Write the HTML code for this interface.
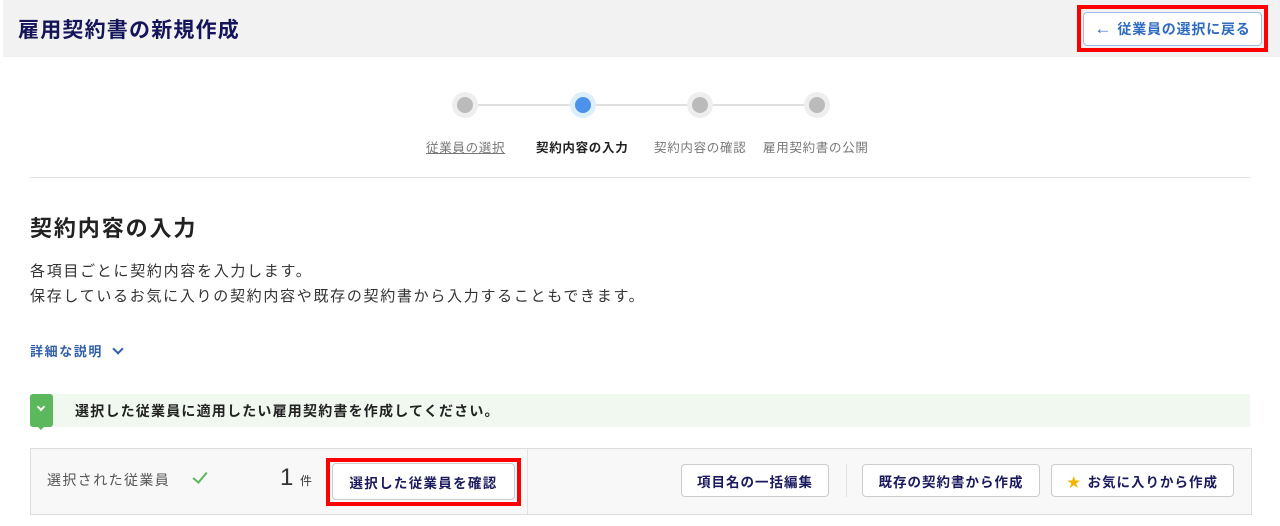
<!DOCTYPE html>
<html><head><meta charset="utf-8"><style>
*{box-sizing:border-box;margin:0;padding:0}
body{width:1280px;height:526px;background:#fff;font-family:"Liberation Sans","Noto Sans CJK JP",sans-serif;position:relative;overflow:hidden;color:#333}
.a{position:absolute}
.hdr{left:3px;top:0;width:1277px;height:57px;background:#f2f2f2}
.title{left:18px;top:14px;font-size:21px;font-weight:bold;color:#14145a;letter-spacing:1.2px}
.btn{background:#fff;border:1px solid #ccc;border-radius:4px;font-weight:bold;font-size:13.5px;color:#1a1a5e;display:flex;align-items:center;justify-content:center;letter-spacing:1px;white-space:nowrap}
.c{width:26px;height:26px;border-radius:50%;background:#eee;top:92px}
.c i{position:absolute;left:5px;top:5px;width:16px;height:16px;border-radius:50%;background:#bbb}
.lab{top:137px;font-size:12.5px;color:#777;letter-spacing:0.7px;white-space:nowrap}
</style></head><body>
<div class="a hdr"></div>
<div class="a title">雇用契約書の新規作成</div>
<div class="a" style="left:1077px;top:5px;width:191px;height:47px;border:4px solid #f00"></div>
<div class="a btn" style="left:1083px;top:12px;width:179px;height:34px;border-color:#9bbde6;color:#2f6bbf;font-size:14px;letter-spacing:0.8px"><span style="font-size:17px;margin-right:6px;letter-spacing:0">←</span>従業員の選択に戻る</div>

<div class="a" style="left:478px;top:104px;width:328px;height:2px;background:#e0e0e0"></div>
<div class="a c" style="left:452px"><i></i></div>
<div class="a c" style="left:570px;background:#ddeefc"><i style="background:#4d93ec"></i></div>
<div class="a c" style="left:687px"><i></i></div>
<div class="a c" style="left:804px"><i></i></div>
<div class="a lab" style="left:426px;text-decoration:underline">従業員の選択</div>
<div class="a lab" style="left:536px;color:#222;font-weight:bold">契約内容の入力</div>
<div class="a lab" style="left:654px">契約内容の確認</div>
<div class="a lab" style="left:763px">雇用契約書の公開</div>
<div class="a" style="left:30px;top:177px;width:1220px;height:1px;background:#e4e4e4"></div>

<div class="a" style="left:30px;top:211px;font-size:22px;font-weight:bold;color:#222;letter-spacing:1.9px">契約内容の入力</div>
<div class="a" style="left:30px;top:259px;font-size:15px;line-height:25px;color:#333;letter-spacing:1.7px;white-space:nowrap">各項目ごとに契約内容を入力します。<br>保存しているお気に入りの契約内容や既存の契約書から入力することもできます。</div>
<div class="a" style="left:30px;top:341px;font-size:13px;font-weight:bold;color:#2f5fa8;letter-spacing:1.6px">詳細な説明 <span style="display:inline-block;width:8px;height:8px;border-right:2px solid #2f5fa8;border-bottom:2px solid #2f5fa8;transform:rotate(45deg);margin-left:6px;position:relative;top:-3px"></span></div>

<div class="a" style="left:30px;top:394px;width:1220px;height:33px;background:#f0f8f0"></div>
<div class="a" style="left:30px;top:394px;width:23px;height:33px;background:#5cb85c;border-radius:3px"></div>
<div class="a" style="left:36px;top:425px;width:0;height:0;border-left:5px solid transparent;border-right:5px solid transparent;border-top:5px solid #5cb85c"></div>
<div class="a" style="left:38px;top:404px;width:6px;height:6px;border-right:2px solid #fff;border-bottom:2px solid #fff;transform:rotate(45deg)"></div>
<div class="a" style="left:75px;top:401px;font-size:14px;font-weight:bold;color:#222;letter-spacing:1.2px;white-space:nowrap">選択した従業員に適用したい雇用契約書を作成してください。</div>

<div class="a" style="left:30px;top:448px;width:1222px;height:67px;background:#f8f8f8;border:1px solid #ddd"></div>
<div class="a" style="left:527px;top:449px;width:1px;height:65px;background:#e2e2e2"></div>
<div class="a" style="left:47px;top:470px;font-size:14px;color:#555;letter-spacing:1.4px">選択された従業員</div>
<div class="a" style="left:196px;top:469px;width:8px;height:14px;border-right:2px solid #5cb85c;border-bottom:2px solid #5cb85c;transform:rotate(40deg)"></div>
<div class="a" style="left:280px;top:464px;font-size:24px;color:#333">1 <span style="font-size:12px">件</span></div>
<div class="a" style="left:326px;top:458px;width:195px;height:48px;border:4px solid #f00"></div>
<div class="a btn" style="left:332px;top:463px;width:183px;height:37px;letter-spacing:1.3px">選択した従業員を確認</div>
<div class="a btn" style="left:681px;top:464px;width:148px;height:33px">項目名の一括編集</div>
<div class="a" style="left:846px;top:464px;width:1px;height:33px;background:#e2e2e2"></div>
<div class="a btn" style="left:862px;top:464px;width:178px;height:33px">既存の契約書から作成</div>
<div class="a btn" style="left:1051px;top:464px;width:183px;height:33px"><span style="color:#f5b400;margin-right:6px">★</span>お気に入りから作成</div>
</body></html>
